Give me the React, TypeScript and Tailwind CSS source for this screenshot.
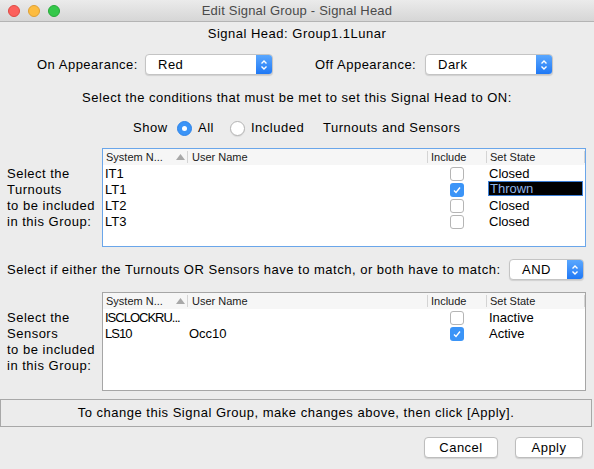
import React from 'react';

const font = { fontFamily: '"Liberation Sans", Arial, sans-serif' };

function Combo({ value, width }: { value: string; width: string }) {
  return (
    <div className={`${width} h-[21px] flex bg-white border border-[#c4c4c4] rounded-[4px] shadow-[0_1px_1px_rgba(0,0,0,0.12)] overflow-hidden`}>
      <div className="flex-1 pl-[12px] text-[13px] leading-[19px] text-black">{value}</div>
      <div className="w-[16px] bg-gradient-to-b from-[#5aa7fe] to-[#1e78f5] flex items-center justify-center">
        <svg width="8" height="12" viewBox="0 0 8 12">
          <path d="M1.5 4.5 L4 2 L6.5 4.5 M1.5 7.5 L4 10 L6.5 7.5" fill="none" stroke="white" strokeWidth="1.4" />
        </svg>
      </div>
    </div>
  );
}

function Radio({ checked }: { checked: boolean }) {
  return checked ? (
    <div className="w-[15px] h-[15px] rounded-full bg-[#3b94f7] border border-[#2f84e8] flex items-center justify-center">
      <div className="w-[5px] h-[5px] rounded-full bg-white" />
    </div>
  ) : (
    <div className="w-[15px] h-[15px] rounded-full bg-white border border-[#b3b3b3] shadow-[0_1px_1px_rgba(0,0,0,0.08)]" />
  );
}

function Check({ checked }: { checked: boolean }) {
  return checked ? (
    <div className="w-[14px] h-[14px] rounded-[3px] bg-[#3b94f7] flex items-center justify-center">
      <svg width="10" height="10" viewBox="0 0 10 10">
        <path d="M2 5.5 L4 7.5 L8 2.5" fill="none" stroke="white" strokeWidth="1.4" />
      </svg>
    </div>
  ) : (
    <div className="w-[14px] h-[14px] rounded-[3px] bg-white border border-[#b5b5b5]" />
  );
}

type Row = { sys: string; user: string; inc: boolean; state: string; sel?: boolean };

function Table({ rows, focused, condensed }: { rows: Row[]; focused?: boolean; condensed?: boolean }) {
  const cols = 'grid grid-cols-[85px_240px_59px_98px]';
  return (
    <div className={`w-[484px] h-[99px] bg-white border tracking-normal ${focused ? 'border-[#6aa6ea]' : 'border-[#a6a6a6]'}`}>
      <div className={`${cols} h-[16px] bg-[#f6f6f6] text-[11px] leading-[16px] text-[#1a1a1a]`}>
        <div className="flex items-center pl-[3px] border-r border-[#d4d4d4] my-[2px] leading-[12px]">
          <span>System N...</span>
          <svg className="ml-[13px]" width="9" height="6" viewBox="0 0 9 6">
            <path d="M0 6 L4.5 0 L9 6 Z" fill="#a8a8a8" />
          </svg>
        </div>
        <div className="pl-[4px] border-r border-[#d4d4d4] my-[2px] leading-[12px]">User Name</div>
        <div className="pl-[3px] border-r border-[#d4d4d4] my-[2px] leading-[12px]">Include</div>
        <div className="pl-[3px] border-r border-[#d4d4d4] my-[2px] leading-[12px]">Set State</div>
      </div>
      {rows.map((r) => (
        <div key={r.sys} className={`${cols} h-[16px] text-[13px] leading-[17px] text-black`}>
          <div className={`pl-[2px] whitespace-nowrap ${condensed ? 'tracking-[-1px]' : ''}`}>{r.sys}</div>
          <div className="pl-[1px]">{r.user}</div>
          <div className="flex items-center justify-center pr-[2px]">
            <Check checked={r.inc} />
          </div>
          <div className="pl-[2px]">
            {r.sel ? (
              <div className="-ml-[1px] w-[95px] h-[15px] bg-black border border-[#3d7fd6] text-[#8fb5e8] leading-[14px] pl-[1px]">{r.state}</div>
            ) : (
              r.state
            )}
          </div>
        </div>
      ))}
    </div>
  );
}

function SideLabel({ what }: { what: string }) {
  return (
    <div className="w-[95px] text-[13px] leading-[16px] text-black">
      <div>Select the</div>
      <div>{what}</div>
      <div>to be included</div>
      <div>in this Group:</div>
    </div>
  );
}

function Button({ label, width }: { label: string; width: string }) {
  return (
    <div className={`${width} h-[21px] bg-white border border-[#bdbdbd] rounded-[4px] shadow-[0_1px_1px_rgba(0,0,0,0.12)] text-[13px] leading-[19px] text-center text-black`}>
      {label}
    </div>
  );
}

export default function App() {
  return (
    <div className="w-[594px] h-[469px] bg-[#ececec] overflow-hidden tracking-[0.5px]" style={font}>
      {/* title bar */}
      <div className="h-[22px] grid grid-cols-[1fr_auto_1fr] items-center bg-gradient-to-b from-[#ebebeb] to-[#d6d6d6] border-b border-[#b4b4b4]">
        <div className="flex gap-[8px] pl-[8px]">
          <div className="w-[12px] h-[12px] rounded-full bg-[#fc605c] border border-[#de4a43]" />
          <div className="w-[12px] h-[12px] rounded-full bg-[#fdbc40] border border-[#dea034]" />
          <div className="w-[12px] h-[12px] rounded-full bg-[#34c84a] border border-[#27a93a]" />
        </div>
        <div className="text-[13px] text-[#4a4a4a] tracking-[0.2px]">Edit Signal Group - Signal Head</div>
        <div />
      </div>

      <div className="mt-[4px] text-center text-[13px] leading-[16px] text-black">Signal Head: Group1.1Lunar</div>

      <div className="mt-[12px] flex items-center text-[13px] text-black">
        <div className="w-[145px] pl-[37px]">On Appearance:</div>
        <Combo value="Red" width="w-[128px]" />
        <div className="w-[152px] pl-[42px]">Off Appearance:</div>
        <Combo value="Dark" width="w-[128px]" />
      </div>

      <div className="mt-[15px] text-center text-[13px] leading-[16px] text-black">
        Select the conditions that must be met to set this Signal Head to ON:
      </div>

      <div className="mt-[14px] flex items-center pl-[133px] text-[13px] leading-[16px] text-black">
        <span className="w-[44px]">Show</span>
        <Radio checked />
        <span className="ml-[6px] w-[32px]">All</span>
        <Radio checked={false} />
        <span className="ml-[6px] w-[72px]">Included</span>
        <span>Turnouts and Sensors</span>
      </div>

      <div className="mt-[12px] flex items-center pl-[7px]">
        <SideLabel what="Turnouts" />
        <Table
          focused
          rows={[
            { sys: 'IT1', user: '', inc: false, state: 'Closed' },
            { sys: 'LT1', user: '', inc: true, state: 'Thrown', sel: true },
            { sys: 'LT2', user: '', inc: false, state: 'Closed' },
            { sys: 'LT3', user: '', inc: false, state: 'Closed' },
          ]}
        />
      </div>

      <div className="mt-[12px] flex items-center pl-[7px] text-[13px] text-black">
        <span className="w-[502px]">Select if either the Turnouts OR Sensors have to match, or both have to match:</span>
        <Combo value="AND" width="w-[75px]" />
      </div>

      <div className="mt-[12px] flex items-center pl-[7px]">
        <SideLabel what="Sensors" />
        <Table
          condensed
          rows={[
            { sys: 'ISCLOCKRU...', user: '', inc: false, state: 'Inactive' },
            { sys: 'LS10', user: 'Occ10', inc: true, state: 'Active' },
          ]}
        />
      </div>

      <div className="mt-[8px] mr-[2px] h-[28px] border border-[#a8a8a8] flex items-center justify-center text-[13px] text-black">
        To change this Signal Group, make changes above, then click [Apply].
      </div>

      <div className="mt-[10px] flex justify-end gap-[17px] pr-[11px]">
        <Button label="Cancel" width="w-[74px]" />
        <Button label="Apply" width="w-[68px]" />
      </div>
    </div>
  );
}
